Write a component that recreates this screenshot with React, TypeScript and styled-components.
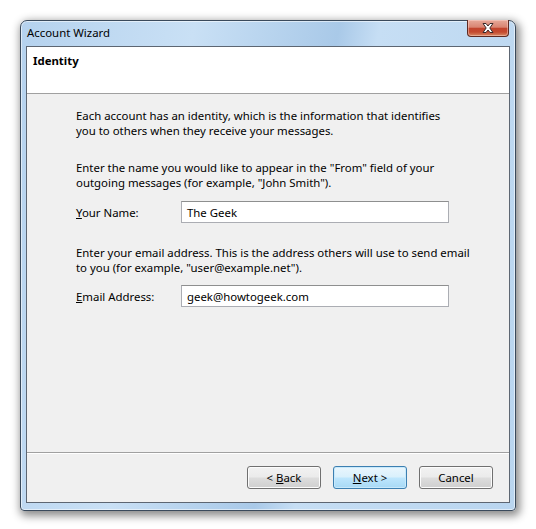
import React from "react";
import styled, { createGlobalStyle } from "styled-components";

const Global = createGlobalStyle`
  html, body { margin: 0; padding: 0; background: #ffffff; }
  body { font-family: "Noto Sans", "Open Sans", sans-serif; font-size: 11.4px; color: #000; }
  * { box-sizing: border-box; }
`;

const Page = styled.div`
  padding: 20px 20px 19px 20px;
  width: 536px;
  height: 529px;
`;

const Window = styled.div`
  width: 496px;
  height: 491px;
  display: flex;
  flex-direction: column;
  border: 1px solid #3a4a5c;
  border-radius: 7px 7px 4px 4px;
  background: linear-gradient(100deg, #b5d2ee 0%, #c9e0f5 30%, #a9c9e8 55%, #c6def4 62%, #b9d5ef 100%);
  box-shadow: 2px 3px 9px 2px rgba(0, 0, 0, 0.45), inset 0 0 0 1px rgba(255, 255, 255, 0.55);
  padding: 0 5px 7px 5px;
`;

const TitleBar = styled.div`
  height: 25px;
  display: flex;
  align-items: flex-start;
  justify-content: space-between;
`;

const Title = styled.div`
  padding: 4px 0 0 1px;
  color: #000;
`;

const CloseButton = styled.div`
  width: 42px;
  height: 17px;
  margin: -1px 1px 0 0;
  border: 1px solid #5e2a22;
  border-top: none;
  border-radius: 0 0 4px 4px;
  background: linear-gradient(#e7a99a 0%, #d98471 45%, #c2442d 52%, #c44a2f 75%, #d88a65 100%);
  display: flex;
  align-items: center;
  justify-content: center;
  box-shadow: inset 0 0 0 1px rgba(255, 220, 210, 0.45);
`;

const Client = styled.div`
  flex: 1;
  display: flex;
  flex-direction: column;
  border: 1px solid #5d6672;
  background: #f0f0f0;
`;

const Header = styled.div`
  height: 47px;
  background: #ffffff;
  border-bottom: 1px solid #a0a0a0;
  padding: 6px 0 0 6px;
  font-weight: bold;
`;

const Body = styled.div`
  flex: 1;
  padding: 14px 0 0 49px;
  display: flex;
  flex-direction: column;
`;

const Para = styled.p<{ $top: number }>`
  margin: ${(p) => p.$top}px 0 0 0;
  line-height: 15px;
  white-space: nowrap;
`;

const FieldRow = styled.div<{ $top: number }>`
  margin-top: ${(p) => p.$top}px;
  display: grid;
  grid-template-columns: 105px 268px;
  align-items: center;
`;

const Label = styled.label``;

const TextBox = styled.div`
  height: 22px;
  border: 1px solid #abadb3;
  border-top-color: #8e8f8f;
  background: #fff;
  padding: 0 5px;
  display: flex;
  align-items: center;
`;

const Footer = styled.div`
  height: 50px;
  border-top: 1px solid #a0a0a0;
  box-shadow: inset 0 1px 0 #ffffff;
  display: flex;
  justify-content: flex-end;
  gap: 12px;
  padding: 13px 16px 0 0;
`;

const Button = styled.div<{ $default?: boolean }>`
  width: 74px;
  height: 23px;
  border: 1px solid ${(p) => (p.$default ? "#3c7fb1" : "#707070")};
  border-radius: 3px;
  background: ${(p) =>
    p.$default
      ? "linear-gradient(#eaf6fd 0%, #d9f0fc 48%, #bee6fd 52%, #a7d9f5 100%)"
      : "linear-gradient(#f2f2f2 0%, #ebebeb 48%, #dddddd 52%, #cfcfcf 100%)"};
  box-shadow: inset 0 0 0 1px ${(p) => (p.$default ? "#c8e9fb" : "#fcfcfc")};
  display: flex;
  align-items: center;
  justify-content: center;
`;

export default function App() {
  return (
    <>
      <Global />
      <Page>
        <Window>
          <TitleBar>
            <Title>Account Wizard</Title>
            <CloseButton>
              <svg width="16" height="12" viewBox="0 0 16 12">
                <path
                  d="M3 1.5 L6 1.5 L8 4 L10 1.5 L13 1.5 L9.8 6 L13 10.5 L10 10.5 L8 8 L6 10.5 L3 10.5 L6.2 6 Z"
                  fill="#ffffff"
                  stroke="#3a2a2a"
                  strokeWidth="1"
                  strokeLinejoin="round"
                />
              </svg>
            </CloseButton>
          </TitleBar>
          <Client>
            <Header>Identity</Header>
            <Body>
              <Para $top={0}>
                Each account has an identity, which is the information that identifies
                <br />
                you to others when they receive your messages.
              </Para>
              <Para $top={22}>
                Enter the name you would like to appear in the "From" field of your
                <br />
                outgoing messages (for example, "John Smith").
              </Para>
              <FieldRow $top={11}>
                <Label>
                  <u>Y</u>our Name:
                </Label>
                <TextBox>The Geek</TextBox>
              </FieldRow>
              <Para $top={22}>
                Enter your email address. This is the address others will use to send email
                <br />
                to you (for example, "user@example.net").
              </Para>
              <FieldRow $top={10}>
                <Label>
                  <u>E</u>mail Address:
                </Label>
                <TextBox>geek@howtogeek.com</TextBox>
              </FieldRow>
            </Body>
            <Footer>
              <Button>
                &lt;&nbsp;<u>B</u>ack
              </Button>
              <Button $default>
                <u>N</u>ext &gt;
              </Button>
              <Button>Cancel</Button>
            </Footer>
          </Client>
        </Window>
      </Page>
    </>
  );
}
